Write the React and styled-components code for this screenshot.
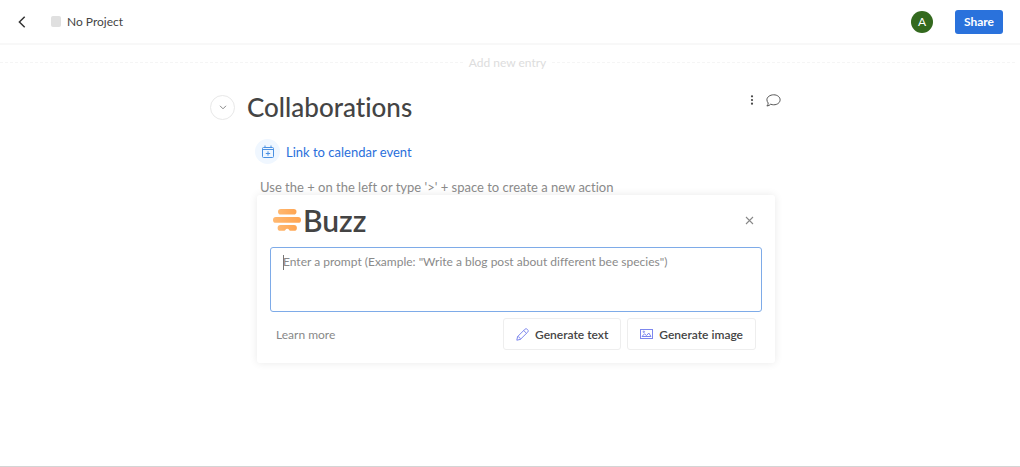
import React, { useState } from "react";
import styled, { createGlobalStyle } from "styled-components";

const App = () => {
  const [prompt, setPrompt] = useState("");

  return (
    <Page>
      <GlobalStyle />
      <Header>
        <BackButton aria-label="Back">
          <svg width="8" height="12" viewBox="0 0 8 12" fill="none" stroke="#333" strokeWidth="1.5">
            <path d="M6.7 0.8L1.4 6l5.3 5.2" />
          </svg>
        </BackButton>
        <Project>
          <ProjectColor />
          No Project
        </Project>
        <Avatar>A</Avatar>
        <ShareButton>Share</ShareButton>
      </Header>

      <NewEntry>Add new entry</NewEntry>

      <Entry>
        <TitleRow>
          <Collapse aria-label="Collapse">
            <svg width="8" height="5" viewBox="0 0 8 5" fill="none" stroke="#888">
              <path d="M1 0.8l3 3 3-3" />
            </svg>
          </Collapse>
          <Title>Collaborations</Title>
          <TitleActions>
            <IconButton aria-label="More">
              <svg width="4" height="10" viewBox="0 0 4 10" fill="#444">
                <circle cx="2" cy="1.3" r="1.1" />
                <circle cx="2" cy="5" r="1.1" />
                <circle cx="2" cy="8.7" r="1.1" />
              </svg>
            </IconButton>
            <IconButton aria-label="Comments">
              <svg width="15" height="13" viewBox="0 0 15 13" fill="none" stroke="#555" strokeLinejoin="round">
                <path d="M7.7 0.8c3.7 0 6.4 2.2 6.4 5s-2.7 5-6.4 5c-1.1 0-2.1-.2-3-.6-.9 1-2.2 1.7-3.8 1.8.8-.8 1.3-1.8 1.3-3C1.5 8.1.9 7 .9 5.8c0-2.8 3.1-5 6.8-5z" />
              </svg>
            </IconButton>
          </TitleActions>
        </TitleRow>

        <Body>
          <CalendarLink href="#calendar">
            <CalendarIcon>
              <svg width="12" height="13" viewBox="0 0 12 13" fill="none" stroke="#4a90e2">
                <rect x="0.5" y="2.5" width="11" height="10" rx="1" />
                <path d="M0.5 4.5h11M3 0.5v2.5M9 0.5v2.5M6 6.300v4.400M3.800 8.500h4.400" />
              </svg>
            </CalendarIcon>
            Link to calendar event
          </CalendarLink>
          <Hint>Use the + on the left or type '&gt;' + space to create a new action</Hint>

          <Card>
            <CardHeader>
              <BuzzLogo />
              <BuzzName>Buzz</BuzzName>
              <CloseButton aria-label="Close">
                <svg width="9" height="9" viewBox="0 0 9 9" fill="none" stroke="#888" strokeWidth="1.1">
                  <path d="M1 1l7 7M8 1L1 8" />
                </svg>
              </CloseButton>
            </CardHeader>
            <PromptBox>
              <Prompt
                aria-label="Prompt"
                placeholder={'Enter a prompt (Example: "Write a blog post about different bee species")'}
                value={prompt}
                onChange={(e) => setPrompt(e.target.value)}
              />
              {!prompt && <Caret />}
            </PromptBox>
            <CardFooter>
              <LearnMore href="#learn">Learn more</LearnMore>
              <GenerateButton>
                <svg width="13" height="13" viewBox="0 0 13 13" fill="none" stroke="#7d87ee">
                  <path d="M0.8 12.2l.8-3.6L9 1.2c.7-.6 1.5-.6 2.1 0l.7.7c.6.6.6 1.4 0 2.1L4.4 11.4l-3.6.8z" />
                  <path d="M7.7 2.5l2.8 2.8M1.6 8.6c1.5 0 2.8 1.3 2.8 2.8" />
                </svg>
                Generate text
              </GenerateButton>
              <GenerateButton>
                <svg width="13" height="10" viewBox="0 0 13 10" fill="none" stroke="#7d87ee">
                  <rect x="0.5" y="0.5" width="12" height="9" />
                  <path d="M2 7.5l2.5-2.7 2 1.8 2.3-2.6L11 7.5M2 7.5h9" />
                  <circle cx="3.8" cy="2.8" r="0.7" />
                </svg>
                Generate image
              </GenerateButton>
            </CardFooter>
          </Card>
        </Body>
      </Entry>
    </Page>
  );
};
export default App;

const BuzzLogo = () => (
  <svg width="28" height="22" viewBox="0 0 28 22">
    <defs>
      <linearGradient id="honey" x1="0" y1="0" x2="1" y2="0">
        <stop offset="0" stopColor="#ffb870" />
        <stop offset="1" stopColor="#ffa552" />
      </linearGradient>
    </defs>
    <g fill="url(#honey)">
      <rect x="5" y="0" width="18.5" height="5.6" rx="2.8" />
      <rect x="0" y="8" width="28" height="5.8" rx="2.9" />
      <path d="M7.5 16h13.5a2.9 2.9 0 0 1 0 5.8h-3.8c-.5 0-.9-.3-1.1-.7a2 2 0 0 0-3.7 0c-.2.4-.6.7-1.1.7H7.5a2.9 2.9 0 0 1 0-5.8z" />
    </g>
  </svg>
);

const GlobalStyle = createGlobalStyle`
  * {
    box-sizing: border-box;
  }
  body {
    margin: 0;
    background: #fff;
    color: #444;
    font-family: Lato, "Liberation Sans", sans-serif;
    font-size: 13px;
    font-variant-ligatures: none;
  }
  button, textarea {
    font-family: inherit;
    font-size: inherit;
    font-variant-ligatures: inherit;
  }
`;

const Page = styled.div`
  min-height: 100vh;
  border-bottom: 1px solid #d4d4d4;
`;

const Header = styled.header`
  display: flex;
  align-items: center;
  height: 45px;
  padding: 0 17px 0 16px;
  border-bottom: 2px solid #f8f8f8;
`;

const IconButton = styled.button`
  display: flex;
  align-items: center;
  justify-content: center;
  padding: 0;
  border: none;
  background: none;
  cursor: pointer;
`;

const BackButton = styled(IconButton)`
  width: 12px;
  height: 24px;
`;

const Project = styled.div`
  display: flex;
  align-items: center;
  gap: 6px;
  margin: 0 auto 0 23px;
  font-size: 12px;
`;

const ProjectColor = styled.span`
  width: 10px;
  height: 11px;
  border-radius: 2px;
  background: #e0e0e0;
`;

const Avatar = styled.div`
  width: 22px;
  height: 22px;
  margin-right: 22px;
  border-radius: 50%;
  background: #33691e;
  color: #fff;
  font-size: 12px;
  line-height: 22px;
  text-align: center;
`;

const ShareButton = styled.button`
  width: 48px;
  height: 24px;
  padding: 0;
  border: none;
  border-radius: 3px;
  background: #2a72dc;
  color: #fff;
  font-size: 12px;
  font-weight: 700;
  cursor: pointer;
`;

const NewEntry = styled.div`
  display: flex;
  align-items: center;
  gap: 6px;
  height: 18px;
  margin-top: 8px;
  padding-right: 5px;
  color: #ddd;
  font-size: 12px;

  &::before,
  &::after {
    content: "";
    flex: 1;
    border-top: 1px dashed #f5f5f5;
  }
`;

const Entry = styled.main`
  max-width: 600px;
  margin: 0 auto;
  padding-top: 20px;
`;

const TitleRow = styled.div`
  display: flex;
  align-items: center;
  height: 32px;
`;

const Collapse = styled(IconButton)`
  width: 25px;
  height: 25px;
  border: 1px solid #e8e8e8;
  border-radius: 50%;
`;

const Title = styled.h1`
  flex: 1;
  margin: 0 0 0 12px;
  font-size: 26px;
  font-weight: 500;
`;

const TitleActions = styled.div`
  display: flex;
  gap: 12px;
  margin: 0 29px 14px 0;
`;

const Body = styled.div`
  padding: 0 35px 0 47px;
`;

const CalendarLink = styled.a`
  display: flex;
  align-items: center;
  gap: 6px;
  margin: 16px 0 0 -2px;
  color: #2a6fdb;
  text-decoration: none;
`;

const CalendarIcon = styled.span`
  display: flex;
  align-items: center;
  justify-content: center;
  width: 25px;
  height: 25px;
  border-radius: 50%;
  background: #f0f7ff;
`;

const Hint = styled.p`
  margin: 15px 0 0 3px;
  color: #8a8a8a;
  line-height: 16px;
`;

const Card = styled.section`
  padding: 10px 13px 13px;
  border-radius: 3px;
  background: #fff;
  box-shadow: 0 0 8px rgba(0, 0, 0, 0.09);
`;

const CardHeader = styled.div`
  display: flex;
  align-items: center;
  height: 30px;
  padding: 0 8px 0 3px;
`;

const BuzzName = styled.h2`
  flex: 1;
  margin: 0 0 0 2px;
  font-size: 30px;
  line-height: 30px;
  font-weight: 600;
`;

const CloseButton = styled(IconButton)`
  width: 9px;
`;

const PromptBox = styled.div`
  position: relative;
  margin-top: 12px;
`;

const Prompt = styled.textarea`
  display: block;
  width: 100%;
  height: 65px;
  padding: 6px 12px;
  border: 1px solid #7eabe8;
  border-radius: 3px;
  outline: none;
  color: #444;
  font-size: 12px;
  line-height: 16px;
  resize: none;

  &::placeholder {
    color: #8a8a8a;
  }
`;

const Caret = styled.span`
  position: absolute;
  top: 8px;
  left: 13px;
  width: 1px;
  height: 15px;
  background: #777;
`;

const CardFooter = styled.div`
  display: flex;
  align-items: center;
  gap: 6px;
  margin-top: 6px;
  padding: 0 6px;
`;

const LearnMore = styled.a`
  margin-right: auto;
  color: #888;
  font-size: 12px;
  text-decoration: none;
`;

const GenerateButton = styled.button`
  display: flex;
  align-items: center;
  gap: 6px;
  height: 32px;
  padding: 0 12px;
  border: 1px solid #eee;
  border-radius: 3px;
  background: #fff;
  color: #444;
  font-size: 12px;
  font-weight: 600;
  cursor: pointer;
`;
